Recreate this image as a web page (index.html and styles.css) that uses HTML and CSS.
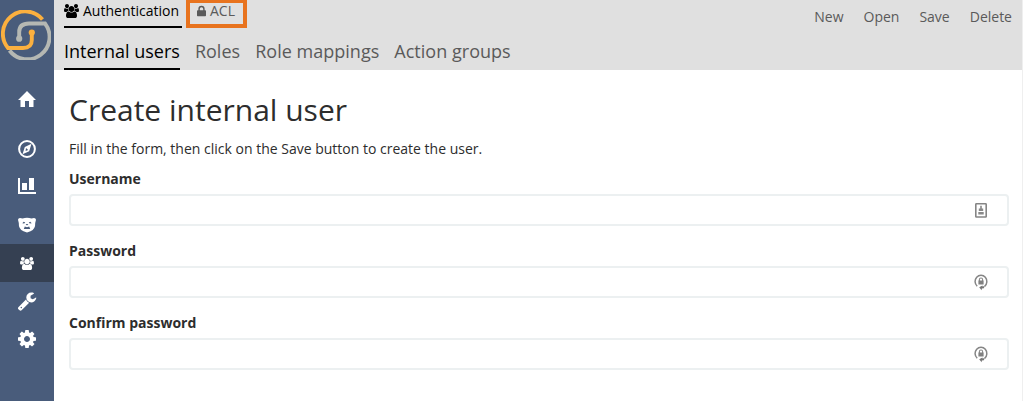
FILE: index.html
```html
<!DOCTYPE html>
<html lang="en">
<head>
<meta charset="utf-8">
<title>Create internal user</title>
<link rel="stylesheet" href="styles.css">
</head>
<body>
<svg class="defs" width="0" height="0">
  <symbol id="users" viewBox="0 0 1920 1792"><path d="M593 896q-162 5-265 128h-134q-82 0-138-40.500t-56-118.500q0-353 124-353 6 0 43.500 21t97.500 42.500 119 21.500q67 0 133-23-5 37-5 66 0 139 81 256zm1071 637q0 120-73 189.500t-194 69.500h-874q-121 0-194-69.500t-73-189.500q0-53 3.500-103.500t14-109 26.500-108.500 43-97.500 62-81 85.500-53.500 111.500-20q10 0 43 21.500t73 48 107 48 135 21.500 135-21.500 107-48 73-48 43-21.500q61 0 111.500 20t85.500 53.500 62 81 43 97.500 26.500 108.500 14 109 3.500 103.500zm-1024-1277q0 106-75 181t-181 75-181-75-75-181 75-181 181-75 181 75 75 181zm704 384q0 159-112.500 271.500t-271.500 112.500-271.500-112.500-112.500-271.500 112.500-271.500 271.500-112.500 271.500 112.500 112.500 271.500zm576 225q0 78-56 118.500t-138 40.500h-134q-103-123-265-128 81-117 81-256 0-29-5-66 66 23 133 23 59 0 119-21.500t97.500-42.500 43.500-21q124 0 124 353zm-128-609q0 106-75 181t-181 75-181-75-75-181 75-181 181-75 181 75 75 181z"/></symbol>
  <symbol id="reset" viewBox="0 0 16 18"><path d="M4.200 13.200A5.900 6.200 0 1 1 11.600 13.300" fill="none" stroke="#858585" stroke-width="1.500"/><path d="M6.200 14.200 9.500 12.400v1.200l2.200-.6-.8 2.200-2 .4-.3 1.600z" fill="#777"/><path d="M6.400 8V6.600a1.600 1.600 0 0 1 3.200 0V8" fill="none" stroke="#888" stroke-width="1.100"/><rect x="5.400" y="7.500" width="5.200" height="4" fill="#808080"/></symbol>
</svg>
<div class="app">
  <nav class="sidebar">
    <a class="logo"><svg width="50" height="50" viewBox="0 0 50 50" fill="none" stroke-width="3.900">
      <path d="M41.500 9.500A22.200 22.200 0 0 0 7 38H22C28 38 30.800 35 30.800 30V23" stroke="#fbb03f"/>
      <path d="M8.500 40.500A22.200 22.200 0 0 0 44 13.500H28C21 13.500 18.200 16.500 18.200 22V28" stroke="#b5b8b3"/>
      <circle class="dot-orange" cx="30.800" cy="22.500" r="3.100"/><circle class="dot-gray" cx="18.200" cy="28.700" r="3.100"/>
    </svg></a>
    <a class="item home"><svg width="18" height="16" viewBox="0 0 18 16"><path d="M9 0 18 9H15.500V16H11V10H7V16H2.500V9H0z"/></svg></a>
    <a class="item"><svg width="18" height="18" viewBox="0 0 18 18"><circle cx="9" cy="9" r="7.900" fill="none" stroke="#fff" stroke-width="2"/><path fill-rule="evenodd" d="M13.500 3.800 11.200 11.200 4.500 14.300 6.800 6.900zM8 7.900 7.600 11 10.200 9.900z"/></svg></a>
    <a class="item chart"><svg width="18" height="16" viewBox="0 0 18 16"><path d="M0 0h2v14h16v2H0zM4 5h5v7H4zM11 0h5v12h-5z"/></svg></a>
    <a class="item"><svg width="18" height="16" viewBox="0 0 18 16"><path d="M0 2.800Q.2 1 2 1L4.500 1.500Q9 .2 13.500 1.500L16 1Q17.800 1 18 2.800L17.200 6Q17.600 12 12.500 14.300L9 15.400 5.500 14.300Q.4 12 .8 6z"/><path class="ink" d="M4.300 6.200 5.700 4.700l1.500.7-1 1.100zM13.700 6.200 12.300 4.700l-1.500.7 1 1.100zM7.600 7h2.800L9 8.500zM5.800 12 6.800 9.500 9 10.300 11.200 9.500 12.200 12z"/></svg></a>
    <a class="item active"><svg width="14" height="13"><use href="#users"/></svg></a>
    <a class="item"><svg width="20" height="20" viewBox="0 0 1792 1792"><path d="M448 1472q0-26-19-45t-45-19-45 19-19 45 19 45 45 19 45-19 19-45zm644-420l-682 682q-37 37-90 37-52 0-91-37l-106-108q-38-36-38-90 0-53 38-91l681-681q39 98 114.500 173.500t173.500 114.500zm634-435q0 39-23 106-47 134-164.500 217.500t-258.500 83.500q-185 0-316.500-131.500t-131.500-316.500 131.500-316.500 316.500-131.500q58 0 121.500 16.500t107.500 46.500q16 11 16 28t-16 28l-293 169v224l193 107q5-3 79-48.500t135.500-81 70.500-35.500q15 0 23.500 10t8.500 25z"/></svg></a>
    <a class="item"><svg width="18" height="18" viewBox="128 128 1536 1536"><path d="M1152 896q0-106-75-181t-181-75-181 75-75 181 75 181 181 75 181-75 75-181zm512-109v222q0 12-8 23t-20 13l-185 28q-19 54-39 91 35 50 107 138 10 12 10 25t-9 23q-27 37-99 108t-94 71q-12 0-26-9l-138-108q-44 23-91 38-16 136-29 186-7 28-36 28h-222q-14 0-24.500-8.500t-11.500-21.500l-28-184q-49-16-90-37l-141 107q-10 9-25 9-14 0-25-11-126-114-165-168-7-10-7-23 0-12 8-23 15-21 51-66.500t54-70.500q-27-50-41-99l-183-27q-13-2-21-12.500t-8-23.500v-222q0-12 8-23t19-13l186-28q14-46 39-92-40-57-107-138-10-12-10-24 0-10 9-23 26-36 98.500-107.500t94.500-71.500q13 0 26 10l138 107q44-23 91-38 16-136 29-186 7-28 36-28h222q14 0 24.500 8.500t11.500 21.500l28 184q49 16 90 37l142-107q9-9 24-9 13 0 25 10 129 119 165 170 7 8 7 22 0 12-8 23-15 21-51 66.500t-54 70.500q26 50 41 98l183 28q13 2 21 12.500t8 23.500z"/></svg></a>
  </nav>
  <div class="page">
    <header class="topbar">
      <div class="row">
        <div class="tabs">
          <a class="tab selected"><svg width="15" height="14"><use href="#users"/></svg>Authentication</a>
          <a class="tab marked"><svg width="9" height="12" viewBox="0 0 10 12"><path d="M2.300 6V3.700a2.700 2.700 0 0 1 5.400 0V6" fill="none" stroke="currentColor" stroke-width="1.600"/><rect y="5.300" width="10" height="6.500" rx=".8"/></svg>ACL</a>
        </div>
        <div class="actions"><a>New</a><a>Open</a><a>Save</a><a>Delete</a></div>
      </div>
      <div class="subtabs"><a class="subtab selected">Internal users</a><a class="subtab">Roles</a><a class="subtab">Role mappings</a><a class="subtab">Action groups</a></div>
    </header>
    <main class="content">
      <h1 class="title">Create internal user</h1>
      <p class="intro">Fill in the form, then click on the Save button to create the user.</p>
      <div class="field"><div class="label">Username</div><div class="input"><svg width="16" height="18" viewBox="0 0 16 18"><rect x="2.800" y="2.800" width="10.400" height="13.200" rx=".6" fill="#fff" stroke="#858585" stroke-width="1.600"/><path d="M7.200 4.800h1.600v2.700h1.400V10H5.800V7.500h1.400zM5.300 11h5.400v2.600H5.300z" fill="#888"/></svg></div></div>
      <div class="field"><div class="label">Password</div><div class="input"><svg width="16" height="18"><use href="#reset"/></svg></div></div>
      <div class="field"><div class="label">Confirm password</div><div class="input"><svg width="16" height="18"><use href="#reset"/></svg></div></div>
    </main>
  </div>
</div>
</body>
</html>
```

FILE: styles.css
```css
* { box-sizing: border-box; }
body { margin: 0; background: #fff; color: #2d2d2d; font: 14px/20px "Open Sans", "Noto Sans", sans-serif; overflow: hidden; }
svg { display: block; flex: none; fill: currentColor; }
.defs { position: absolute; }
.app { display: flex; height: 401px; }
.sidebar { width: 54px; background: #495c7b; color: #fff; flex: none; }
.logo { display: block; height: 80px; padding: 10px 0 0 1px; }
.logo svg { fill: none; }
.dot-orange { fill: #fbb03f; }
.dot-gray { fill: #b5b8b3; }
.item { display: flex; align-items: center; justify-content: center; height: 38px; }
.home { margin-bottom: 12px; }
.chart { padding-bottom: 2px; }
.active { background: #354052; }
.ink { fill: #495c7b; }
.page { flex: 1; border-right: 1px solid #efefef; }
.topbar { height: 70px; background: #e0e0e0; padding-left: 10px; color: #5a5a5a; }
.row { display: flex; justify-content: space-between; height: 34px; }
.tabs { display: flex; align-items: flex-start; gap: 4px; }
.tab { display: flex; height: 28px; padding: 1px 3px 0 0; white-space: nowrap; }
.tab.selected { width: 118px; gap: 4px; border-bottom: 2px solid #000; }
.tab.selected svg { margin-top: 3px; }
.marked { width: 61px; padding: 0 0 0 7px; gap: 4px; border: 4px solid #e8731e; border-top-width: 3px; line-height: 15px; }
.marked svg { margin-top: 2px; }
.actions { display: flex; gap: 20px; padding: 7px 10px 0 0; }
.subtabs { display: flex; gap: 15px; font-size: 18px; line-height: 34px; }
.subtab { height: 36px; white-space: nowrap; }
.subtab + .subtab { letter-spacing: .02px; }
.selected { color: #000; }
.subtab.selected { border-bottom: 2px solid #000; }
.content { padding: 20px 13px 0 15px; }
.title { margin: 0; font-size: 30px; line-height: 40px; font-weight: 400; }
.intro { margin: 9px 0 10px; }
.field { height: 60px; margin-bottom: 12px; }
.label { height: 25px; font-weight: 700; }
.input { display: flex; align-items: center; justify-content: flex-end; height: 32px; padding-right: 18px; border: 2px solid #ecf0f1; border-radius: 4px; }
```
